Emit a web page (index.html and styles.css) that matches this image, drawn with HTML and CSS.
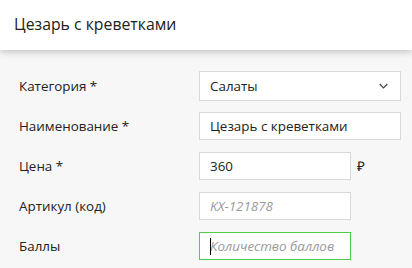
FILE: index.html
```html
<!DOCTYPE html>
<html lang="ru">
<head>
<meta charset="utf-8">
<title>Цезарь с креветками</title>
<link rel="stylesheet" href="styles.css">
</head>
<body>
<header class="header">
  <h1 class="title">Цезарь с креветками</h1>
</header>
<form class="form">
  <div class="row row-select">
    <label class="label">Категория *</label>
    <div class="select">
      <span class="select-value">Салаты</span>
      <svg class="chevron" width="9" height="6" viewBox="0 0 9 6"><path d="M0.7 1 L4.5 4.8 L8.3 1" fill="none" stroke="#444" stroke-width="1.2"/></svg>
    </div>
  </div>
  <div class="row">
    <label class="label">Наименование *</label>
    <input class="input input-wide" type="text" value="Цезарь с креветками">
  </div>
  <div class="row">
    <label class="label">Цена *</label>
    <input class="input" type="text" value="360">
    <span class="currency">₽</span>
  </div>
  <div class="row">
    <label class="label">Артикул (код)</label>
    <input class="input" type="text" placeholder="KX-121878">
  </div>
  <div class="row">
    <label class="label">Баллы</label>
    <span class="field-wrap">
      <input class="input input-focus" type="text" placeholder="Количество баллов">
      <span class="caret"></span>
    </span>
  </div>
</form>
</body>
</html>
```
FILE: styles.css
```css
* { box-sizing: border-box; }
html, body {
  margin: 0;
  padding: 0;
  background: #f7f7f7;
  font-family: "Open Sans", "Liberation Sans", sans-serif;
  color: #222;
}
.header {
  height: 50px;
  background: #fff;
  box-shadow: 0 2px 7px rgba(0, 0, 0, 0.22);
  display: flex;
  align-items: center;
  padding-left: 14px;
  position: relative;
}
.title {
  margin: 0;
  font-size: 15.8px;
  font-weight: 400;
  color: #222;
  position: relative;
  top: -1px;
}
.form {
  padding: 21px 0 0 19px;
  display: flex;
  flex-direction: column;
}
.row {
  display: flex;
  align-items: center;
  height: 28px;
  margin-bottom: 12px;
}
.row-select {
  height: 30px;
  margin-bottom: 11px;
}
.label {
  width: 180px;
  flex: none;
  font-size: 13.4px;
  color: #222;
}
.select {
  width: 202px;
  height: 30px;
  background: #fff;
  border: 1px solid #d9d9d9;
  display: flex;
  align-items: center;
  justify-content: space-between;
  padding: 0 12px 0 10px;
  font-size: 13.4px;
  color: #222;
}
.chevron { display: block; }
.input {
  width: 152px;
  height: 28px;
  background: #fff;
  border: 1px solid #d9d9d9;
  padding: 0 10px;
  font-family: "Open Sans", "Liberation Sans", sans-serif;
  font-size: 13.4px;
  color: #222;
  outline: none;
  border-radius: 0;
  margin: 0;
}
.input::placeholder {
  color: #9a9a9a;
  font-style: italic;
}
.input-wide { width: 202px; }
.input-focus { border-color: #4ccd4c; }
.currency {
  margin-left: 6px;
  font-size: 13.4px;
  font-weight: 400;
  color: #222;
}
.field-wrap {
  position: relative;
  display: block;
  height: 28px;
}
.caret {
  position: absolute;
  left: 11px;
  top: 6px;
  width: 1px;
  height: 17px;
  background: #000;
}
```
